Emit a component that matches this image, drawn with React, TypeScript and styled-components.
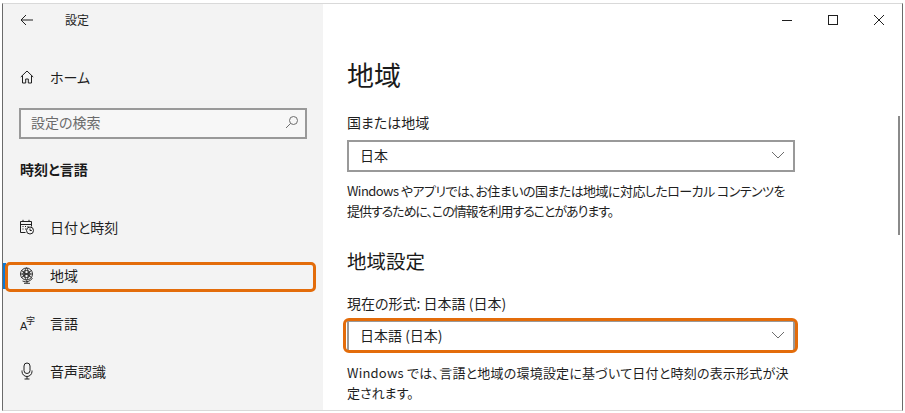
import React from "react";
import styled, { createGlobalStyle } from "styled-components";

const FONT = '"Noto Sans CJK JP", "Open Sans", sans-serif';

const GlobalStyle = createGlobalStyle`
  html, body {
    margin: 0;
    padding: 0;
    background: #ffffff;
    overflow: hidden;
  }
  body {
    font-family: ${FONT};
    font-feature-settings: "palt";
    color: #1f1f1f;
  }
`;

const Frame = styled.div`
  width: 905px;
  height: 413px;
  box-sizing: border-box;
  padding: 3px 2px 2px 2px;
  background: #ffffff;
`;

const Window = styled.div`
  width: 901px;
  height: 408px;
  box-sizing: border-box;
  display: flex;
  position: relative;
  border-top: 1px solid #d9d9d9;
  border-bottom: 1px solid #d9d9d9;
  border-left: 1px solid #6a6a6a;
  border-right: 1px solid #6a6a6a;
  overflow: hidden;
`;

const Sidebar = styled.aside`
  width: 320px;
  flex: none;
  background: #f3f3f3;
  display: flex;
  flex-direction: column;
`;

const TitleBar = styled.div`
  height: 31px;
  display: flex;
  align-items: center;
  padding-left: 17px;
  font-size: 12px;
`;

const TitleText = styled.span`
  margin-left: 31px;
`;

const HomeRow = styled.div`
  margin-top: 23px;
  height: 38px;
  box-sizing: border-box;
  padding: 0 0 1px 17px;
  display: flex;
  align-items: center;
  gap: 16px;
  font-size: 14px;
`;

const Search = styled.div`
  margin: 12px 0 0 16px;
  width: 288px;
  height: 31px;
  box-sizing: border-box;
  border: 2px solid #999999;
  background: #f7f7f7;
  display: flex;
  align-items: center;
  justify-content: space-between;
  padding: 0 6px 3px 10px;
  font-size: 14px;
  color: #6b6b6b;
`;

const SectionTitle = styled.div`
  margin: 18px 0 0 17px;
  height: 24px;
  line-height: 24px;
  font-size: 14px;
  font-weight: 700;
  color: #1a1a1a;
`;

const NavList = styled.nav`
  margin-top: 22px;
  display: flex;
  flex-direction: column;
`;

const NavRow = styled.div<{ $active?: boolean }>`
  height: 48px;
  display: flex;
  align-items: center;
  padding-left: 15px;
  gap: 14px;
  font-size: 14px;
  position: relative;
  ${(p) =>
    p.$active &&
    `
    &::before {
      content: "";
      position: absolute;
      left: 0;
      top: 12px;
      width: 3px;
      height: 26px;
      background: #0a78d4;
    }
    &::after {
      content: "";
      position: absolute;
      left: 2px;
      top: 11px;
      width: 305px;
      height: 24px;
      border: 3px solid #e36c0a;
      border-radius: 5px;
    }
  `}
`;

const IconBox = styled.span`
  width: 18px;
  height: 18px;
  flex: none;
  display: flex;
  align-items: center;
  justify-content: center;
`;

const Main = styled.main`
  flex: 1;
  background: #ffffff;
  position: relative;
  padding: 0 0 0 24px;
  min-width: 0;
`;

const WindowControls = styled.div`
  height: 31px;
  display: flex;
  justify-content: flex-end;
  align-items: center;
  gap: 34px;
  padding-right: 17px;
`;

const PageTitle = styled.h1`
  margin: 18px 0 0;
  height: 44px;
  line-height: 44px;
  font-size: 27px;
  font-weight: 400;
  color: #1a1a1a;
`;

const FieldLabel = styled.div<{ $top: number }>`
  margin-top: ${(p) => p.$top}px;
  font-size: 14px;
  line-height: 20px;
  height: 20px;
`;

const Select = styled.div<{ $top: number; $highlight?: boolean }>`
  margin-top: ${(p) => p.$top}px;
  width: 448px;
  height: 32px;
  box-sizing: border-box;
  border: 2px solid #999999;
  background: #ffffff;
  display: flex;
  align-items: center;
  justify-content: space-between;
  padding: 0 8px 2px 11px;
  font-size: 14px;
  position: relative;
  ${(p) =>
    p.$highlight &&
    `
    &::after {
      content: "";
      position: absolute;
      left: -6px;
      top: -4px;
      right: -5px;
      bottom: -3px;
      border: 3px solid #e36c0a;
      border-radius: 6px;
    }
  `}
`;

const Description = styled.p<{ $top: number }>`
  margin: ${(p) => p.$top}px 0 0;
  width: 470px;
  white-space: nowrap;
  font-size: 13px;
  line-height: 20px;
`;

const DescLine = styled.span<{ $tracking?: number }>`
  display: block;
  letter-spacing: ${(p) => p.$tracking ?? 0}px;
`;

const SubTitle = styled.h2`
  margin: 25px 0 0;
  height: 30px;
  line-height: 30px;
  font-size: 19.5px;
  font-weight: 400;
  color: #1a1a1a;
`;

const ScrollThumb = styled.div`
  position: absolute;
  right: 2px;
  top: 112px;
  width: 2px;
  height: 119px;
  background: #8a8a8a;
`;

const Chevron = () => (
  <svg width="14" height="8" viewBox="0 0 14 8" fill="none" stroke="#6d6d6d" strokeWidth="1">
    <path d="M1 1l6 6 6-6" />
  </svg>
);

const App: React.FC = () => {
  return (
    <Frame>
      <GlobalStyle />
      <Window>
        <Sidebar>
          <TitleBar>
            <svg width="14" height="12" viewBox="0 0 14 12" fill="none" stroke="#1f1f1f" strokeWidth="1">
              <path d="M13 6H1M6 1L1 6l5 5" />
            </svg>
            <TitleText>設定</TitleText>
          </TitleBar>
          <HomeRow>
            <svg width="14" height="14" viewBox="0 0 14 14" fill="none" stroke="#1f1f1f" strokeWidth="1">
              <path d="M.8 7L7 1l6.2 6M2.5 5.5v7.5h3.2V9h2.6v4h3.2V5.5" />
            </svg>
            <span>ホーム</span>
          </HomeRow>
          <Search>
            <span>設定の検索</span>
            <svg width="14" height="14" viewBox="0 0 14 14" fill="none" stroke="#6d6d6d" strokeWidth="1">
              <circle cx="8.5" cy="5.5" r="4" />
              <path d="M5.5 8.5L1 13" />
            </svg>
          </Search>
          <SectionTitle>時刻と言語</SectionTitle>
          <NavList>
            <NavRow>
              <IconBox>
                <svg width="16" height="16" viewBox="0 0 16 16" fill="none" stroke="#1f1f1f" strokeWidth="1">
                  <path d="M6.5 13.5H1.5v-11h11v5M1.5 5.5h11M4 .8v2M10 .8v2" />
                  <path d="M3.5 7.5h1M6 7.5h1M8.5 7.5h1M3.5 10h1M6 10h1" />
                  <circle cx="11" cy="11.5" r="3.5" />
                  <path d="M11 9.5v2h1.8" />
                </svg>
              </IconBox>
              <span>日付と時刻</span>
            </NavRow>
            <NavRow $active>
              <IconBox>
                <svg width="16" height="17" viewBox="0 0 16 17" fill="none" stroke="#1f1f1f" strokeWidth="0.9">
                  <circle cx="7.5" cy="7" r="6" />
                  <circle cx="7.5" cy="7" r="3.6" />
                  <ellipse cx="7.5" cy="7" rx="1.8" ry="6" />
                  <path d="M2.4 3.5l10.2 7M12.6 3.5L2.4 10.5M1.6 7h11.8M13.5 11a7.5 7.5 0 0 1-10 3M8 14v2M5 16.3h6" />
                </svg>
              </IconBox>
              <span>地域</span>
            </NavRow>
            <NavRow>
              <IconBox>
                <svg width="16" height="17" viewBox="0 0 16 17" fill="#1f1f1f">
                  <text x="1" y="15" fontSize="11" fontFamily='"Liberation Sans", sans-serif'>A</text>
                  <text x="7" y="9" fontSize="9" fontFamily='"Noto Sans CJK JP", sans-serif'>字</text>
                </svg>
              </IconBox>
              <span>言語</span>
            </NavRow>
            <NavRow>
              <IconBox>
                <svg width="16" height="18" viewBox="0 0 16 18" fill="none" stroke="#1f1f1f" strokeWidth="1">
                  <rect x="5" y="1" width="6" height="10.5" rx="3" />
                  <path d="M3 8.5v1a5 5 0 0 0 10 0v-1M8 14.5V17M5.5 17h5" />
                </svg>
              </IconBox>
              <span>音声認識</span>
            </NavRow>
          </NavList>
        </Sidebar>
        <Main>
          <WindowControls>
            <svg width="12" height="12" viewBox="0 0 12 12" stroke="#1f1f1f" strokeWidth="1">
              <path d="M1 6.5h10" />
            </svg>
            <svg width="12" height="12" viewBox="0 0 12 12" fill="none" stroke="#1f1f1f" strokeWidth="1">
              <rect x="1.5" y="1.5" width="9" height="9" />
            </svg>
            <svg width="12" height="12" viewBox="0 0 12 12" stroke="#1f1f1f" strokeWidth="1">
              <path d="M1 1l10 10M11 1L1 11" />
            </svg>
          </WindowControls>
          <PageTitle>地域</PageTitle>
          <FieldLabel $top={15}>国または地域</FieldLabel>
          <Select $top={8}>
            <span>日本</span>
            <Chevron />
          </Select>
          <Description $top={9}>
            <DescLine $tracking={-0.55}>
              Windows やアプリでは、お住まいの国または地域に対応したローカル コンテンツを
            </DescLine>
            <DescLine $tracking={-1.05}>提供するために、この情報を利用することがあります。</DescLine>
          </Description>
          <SubTitle>地域設定</SubTitle>
          <FieldLabel $top={17}>現在の形式: 日本語 (日本)</FieldLabel>
          <Select $top={7} $highlight>
            <span>日本語 (日本)</span>
            <Chevron />
          </Select>
          <Description $top={11}>
            <DescLine $tracking={0.22}>
              Windows では、言語と地域の環境設定に基づいて日付と時刻の表示形式が決
            </DescLine>
            <DescLine>定されます。</DescLine>
          </Description>
          <ScrollThumb />
        </Main>
      </Window>
    </Frame>
  );
};

export default App;
